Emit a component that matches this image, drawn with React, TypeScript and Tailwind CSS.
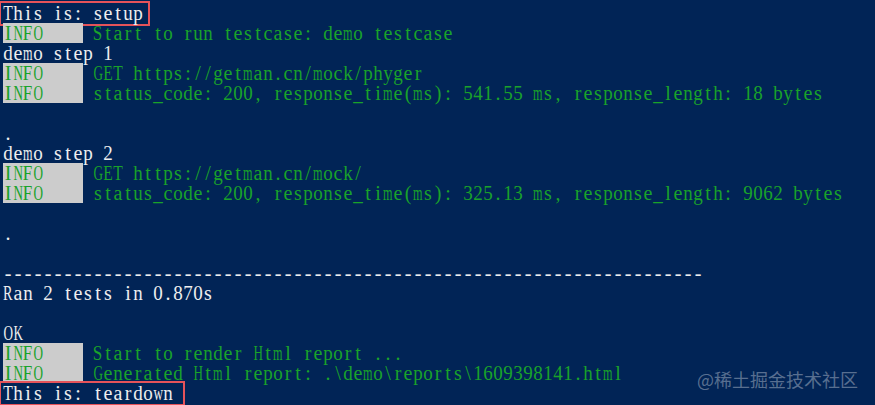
import React from 'react';

type Line =
  | { kind: 'text'; text: string; box?: number }
  | { kind: 'info'; text: string }
  | { kind: 'blank' };

const lines: Line[] = [
  { kind: 'text', text: 'This is: setup', box: 5 },
  { kind: 'info', text: 'Start to run testcase: demo testcase' },
  { kind: 'text', text: 'demo step 1' },
  { kind: 'info', text: 'GET https://getman.cn/mock/phyger' },
  { kind: 'info', text: 'status_code: 200, response_time(ms): 541.55 ms, response_length: 18 bytes' },
  { kind: 'blank' },
  { kind: 'text', text: '.' },
  { kind: 'text', text: 'demo step 2' },
  { kind: 'info', text: 'GET https://getman.cn/mock/' },
  { kind: 'info', text: 'status_code: 200, response_time(ms): 325.13 ms, response_length: 9062 bytes' },
  { kind: 'blank' },
  { kind: 'text', text: '.' },
  { kind: 'blank' },
  { kind: 'text', text: '-'.repeat(70) },
  { kind: 'text', text: 'Ran 2 tests in 0.870s' },
  { kind: 'blank' },
  { kind: 'text', text: 'OK' },
  { kind: 'info', text: 'Start to render Html report ...' },
  { kind: 'info', text: 'Generated Html report: .\\demo\\reports\\1609398141.html' },
  { kind: 'text', text: 'This is: teardown', box: 10 },
];

const FONT = '"Liberation Serif", "DejaVu Serif", serif';
const CELL = 10;

// squeeze wide serif glyphs into a fixed 10px cell, like the console font
let ctx: CanvasRenderingContext2D | null = null;
const widths: Record<string, number> = {};
const squeeze = (ch: string) => {
  if (!(ch in widths)) {
    if (!ctx) ctx = document.createElement('canvas').getContext('2d');
    if (ctx) ctx.font = `20px ${FONT}`;
    widths[ch] = ctx ? ctx.measureText(ch).width : CELL;
  }
  const w = widths[ch];
  return w > CELL - 0.5 ? (CELL - 0.5) / w : 1;
};

const Mono: React.FC<{ text: string }> = ({ text }) => (
  <>
    {Array.from(text).map((ch, i) => {
      const s = squeeze(ch);
      return (
        <span key={i} className="inline-flex w-[10px] justify-center">
          <span className="inline-block" style={s < 1 ? { transform: `scaleX(${s})` } : undefined}>
            {ch === ' ' ? '\u00a0' : ch}
          </span>
        </span>
      );
    })}
  </>
);

const ConsoleLine: React.FC<{ line: Line }> = ({ line }) => {
  if (line.kind === 'blank') return <div className="h-[20px]" />;
  if (line.kind === 'info') {
    return (
      <div className="flex h-[20px] leading-[20px] whitespace-pre text-[#1aa22a]">
        <span className="flex bg-[#cccccc]">
          <Mono text="INFO    " />
        </span>
        <Mono text={' ' + line.text} />
      </div>
    );
  }
  return (
    <div className="flex h-[20px] leading-[20px] whitespace-pre text-[#eeeeee]">
      {line.box !== undefined ? (
        <span
          className="inline-flex h-[21px] -ml-[2px] pl-[2px] ring-2 ring-[#e5535a]"
          style={{ paddingRight: line.box }}
        >
          <Mono text={line.text} />
        </span>
      ) : (
        <Mono text={line.text} />
      )}
    </div>
  );
};

export default function App() {
  return (
    <div
      className="relative w-[875px] h-[405px] overflow-hidden bg-[#012456] pl-[3px] pt-[3px] text-[20px]"
      style={{ fontFamily: FONT }}
    >
      {lines.map((line, i) => (
        <ConsoleLine key={i} line={line} />
      ))}
      <div
        className="absolute right-[17px] bottom-[12px] text-[18px] leading-normal text-white/35"
        style={{ fontFamily: '"Noto Sans CJK SC", "Noto Sans", sans-serif' }}
      >
        @稀土掘金技术社区
      </div>
    </div>
  );
}
